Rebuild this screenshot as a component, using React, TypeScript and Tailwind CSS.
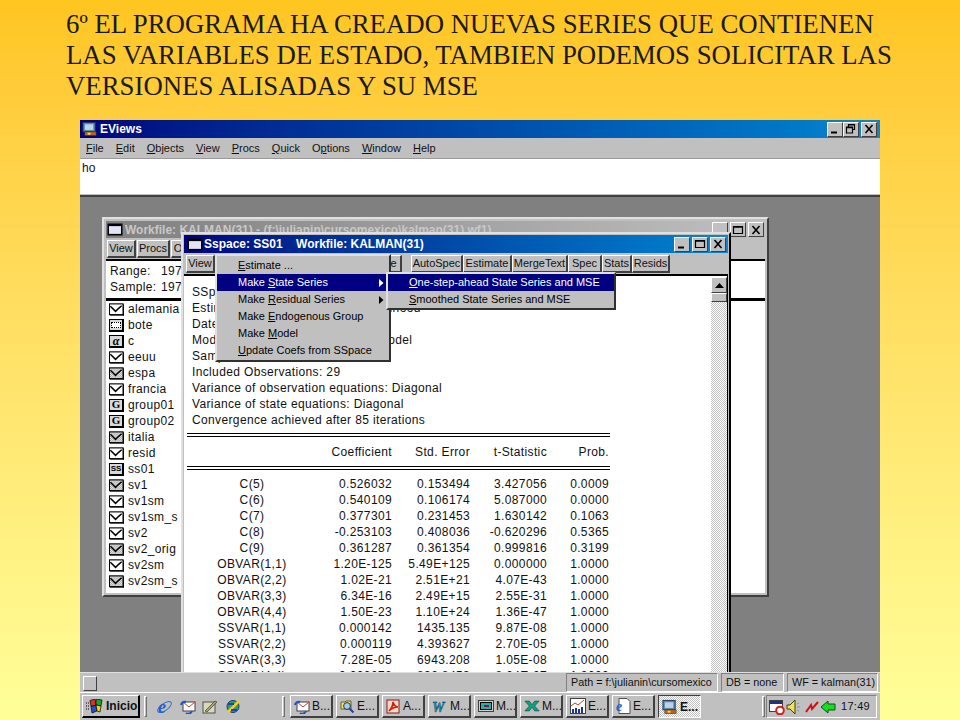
import React from "react";

const bevel = "border border-t-white border-l-white border-r-[#404040] border-b-[#404040] bg-[#c0c0c0]";
const sunken = "border border-t-[#808080] border-l-[#808080] border-r-white border-b-white";
const dither = "bg-[repeating-conic-gradient(#c0c0c0_0_25%,#ffffff_0_50%)] bg-[length:2px_2px]";

const Mn = ({ t, i }: { t: string; i: number }) => (
  <>
    {t.slice(0, i)}
    <u>{t[i]}</u>
    {t.slice(i + 1)}
  </>
);

const WinBtn = ({ kind, dim }: { kind: "min" | "max" | "restore" | "close"; dim?: boolean }) => (
  <div className={`${bevel} w-[16px] h-[15px] flex items-center justify-center`}>
    <svg width="12" height="10" viewBox="0 0 12 10" fill="none" stroke={dim ? "#404040" : "#000"} strokeWidth="1.2">
      {kind === "min" && <path d="M2 8.500h6" strokeWidth="2" />}
      {kind === "max" && <path d="M1.500 1.500h9v7h-9zM1.500 2.200h9" />}
      {kind === "restore" && <path d="M3.500 2.500v-2h6v5h-2M1.500 3h6v6h-6zM3.500 1h6M1.500 3.600h6" />}
      {kind === "close" && <path d="M2.500 1l7 8M9.500 1l-7 8" strokeWidth="1.600" />}
    </svg>
  </div>
);

const DocIcon = () => (
  <svg width="16" height="13" viewBox="0 0 16 13" className="shrink-0">
    <rect x="0.500" y="0.500" width="15" height="12" fill="#000" />
    <rect x="2" y="3" width="12" height="8" fill="#c8c8e8" />
    <path d="M2 5h12M2 7h12M2 9h12" stroke="#fff" />
  </svg>
);

const Series = ({ gray }: { gray?: boolean }) => (
  <svg width="15" height="13" viewBox="0 0 16 13" className="shrink-0">
    <defs>
      <pattern id="dth" width="2" height="2" patternUnits="userSpaceOnUse">
        <rect width="2" height="2" fill="#fff" />
        <rect width="1" height="1" fill="#909090" />
        <rect x="1" y="1" width="1" height="1" fill="#909090" />
      </pattern>
    </defs>
    <rect x="0.500" y="0.500" width="14.500" height="11.500" fill={gray ? "url(#dth)" : "#fff"} stroke="#000" strokeWidth="1.200" />
    <path d="M15.500 1v12M1 12.500h15" stroke="#000" />
    <path d="M1.500 3l5.500 5.500 3-3 3.500-3" fill="none" stroke="#000" strokeWidth="1.600" />
  </svg>
);

const Badge = ({ children, className }: { children: React.ReactNode; className: string }) => (
  <div className={`w-[15px] h-[13px] shrink-0 border border-black border-r-2 border-b-2 flex items-center justify-center bg-[#d8d8d8] text-black font-bold leading-none tracking-normal ${className}`}>
    {children}
  </div>
);

const ListIcon = ({ kind }: { kind: string }) => {
  if (kind === "s") return <Series />;
  if (kind === "g") return <Series gray />;
  if (kind === "G") return <Badge className="text-[11px] [font-family:'Liberation_Serif',serif]">G</Badge>;
  if (kind === "a") return <Badge className="text-[12px] italic [font-family:'Liberation_Serif',serif]">α</Badge>;
  if (kind === "S") return <Badge className="text-[8px] tracking-[1px]">SS</Badge>;
  return (
    <Badge className="">
      <div className="w-[10px] h-[6px] border border-black border-dotted bg-white" />
    </Badge>
  );
};

const objects: [string, string][] = [
  ["alemania", "s"], ["bote", "b"], ["c", "a"], ["eeuu", "s"], ["espa", "g"], ["francia", "s"],
  ["group01", "G"], ["group02", "G"], ["italia", "g"], ["resid", "s"], ["ss01", "S"], ["sv1", "g"],
  ["sv1sm", "s"], ["sv1sm_s", "s"], ["sv2", "s"], ["sv2_orig", "g"], ["sv2sm", "s"], ["sv2sm_s", "g"],
];

const rows = [
  ["C(5)", "0.526032", "0.153494", "3.427056", "0.0009"],
  ["C(6)", "0.540109", "0.106174", "5.087000", "0.0000"],
  ["C(7)", "0.377301", "0.231453", "1.630142", "0.1063"],
  ["C(8)", "-0.253103", "0.408036", "-0.620296", "0.5365"],
  ["C(9)", "0.361287", "0.361354", "0.999816", "0.3199"],
  ["OBVAR(1,1)", "1.20E-125", "5.49E+125", "0.000000", "1.0000"],
  ["OBVAR(2,2)", "1.02E-21", "2.51E+21", "4.07E-43", "1.0000"],
  ["OBVAR(3,3)", "6.34E-16", "2.49E+15", "2.55E-31", "1.0000"],
  ["OBVAR(4,4)", "1.50E-23", "1.10E+24", "1.36E-47", "1.0000"],
  ["SSVAR(1,1)", "0.000142", "1435.135", "9.87E-08", "1.0000"],
  ["SSVAR(2,2)", "0.000119", "4.393627", "2.70E-05", "1.0000"],
  ["SSVAR(3,3)", "7.28E-05", "6943.208", "1.05E-08", "1.0000"],
  ["SSVAR(4,4)", "0.000072", "892.8453", "8.04E-07", "1.0000"],
];

const TableRow = ({ cells }: { cells: string[] }) => (
  <div className="grid grid-cols-[130px_75px_78px_77px_62px] h-[16px] leading-[16px]">
    <div className="text-center">{cells[0]}</div>
    {cells.slice(1).map((c, i) => (
      <div key={i} className="text-right">{c}</div>
    ))}
  </div>
);

const DoubleLine = () => <div className="h-[4px] w-[423px] border-y border-black" />;

const ToolBtn = ({ w, children }: { w: number; children: React.ReactNode }) => (
  <div style={{ width: w }} className={`${bevel} h-[18px] shrink-0 flex items-center justify-center leading-none border-b-2 border-r-2 text-[11px] tracking-normal overflow-hidden`}>
    {children}
  </div>
);

const Arrow = () => (
  <svg width="5" height="8" viewBox="0 0 5 8" className="absolute right-[5px] top-[5px]">
    <path d="M0 0l4.500 4L0 8z" fill="currentColor" />
  </svg>
);

const MenuItem = ({ active, arrow, children }: { active?: boolean; arrow?: boolean; children: React.ReactNode }) => (
  <div className={`relative h-[17px] leading-[17px] whitespace-nowrap pl-[21px] ${active ? "bg-[#000080] text-white" : "text-black"}`}>
    {children}
    {arrow && <Arrow />}
  </div>
);

const WorkfileWindow = () => (
  <div className="absolute left-[22px] top-[20px] w-[667px] h-[380px] border-2 border-t-[#e0e0e0] border-l-[#e0e0e0] border-r-[#404040] border-b-[#404040] bg-[#c0c0c0] p-[2px] flex flex-col tracking-[0.35px]">
    <div className="h-[17px] shrink-0 bg-gradient-to-r from-[#808080] to-[#c0c0c0] flex items-center pl-[1px] gap-[2px] font-bold text-[#c8c8c8] tracking-normal whitespace-nowrap overflow-hidden">
      <DocIcon />
      <span className="flex-1">Workfile: KALMAN(31) - (f:\julianin\cursomexico\kalman(31).wf1)</span>
      <div className="flex items-center gap-[2px] pr-[1px]">
        <WinBtn kind="min" dim />
        <WinBtn kind="max" />
        <WinBtn kind="close" />
      </div>
    </div>
    <div className="h-[18px] mt-[2px] shrink-0 flex gap-[1px] pl-[1px]">
      <ToolBtn w={29}>View</ToolBtn>
      <ToolBtn w={33}>Procs</ToolBtn>
      <ToolBtn w={44}>Objects</ToolBtn>
    </div>
    <div className="h-[39px] shrink-0 bg-white border-t-2 border-black pl-[4px] pt-[2px] leading-[16px] mt-[1px]">
      <div className="flex"><span className="w-[51px]">Range:</span><span>1970</span></div>
      <div className="flex"><span className="w-[51px]">Sample:</span><span>1970</span></div>
    </div>
    <div className="flex-1 min-h-0 bg-white border-t-2 border-black">
      <div className="h-[1px] bg-black" />
      <div className="pl-[3px] flex flex-col">
        {objects.map(([name, kind]) => (
          <div key={name} className="h-[16px] flex items-center gap-[4px] leading-[16px]">
            <ListIcon kind={kind} />
            <span>{name}</span>
          </div>
        ))}
      </div>
    </div>
  </div>
);

const SspaceWindow = () => (
  <div className="absolute left-[101px] top-[35px] w-[550px] h-[460px] border-2 border-t-[#e0e0e0] border-l-[#e0e0e0] border-r-black border-b-black bg-[#c0c0c0] p-[1px] flex flex-col tracking-[0.36px]">
    <div className="h-[18px] shrink-0 bg-gradient-to-r from-[#000080] to-[#1084d0] flex items-center pl-[3px] pr-[2px] gap-[1px] font-bold text-white text-[12px] tracking-normal whitespace-pre">
      <DocIcon />
      <span className="flex-1">Sspace: SS01    Workfile: KALMAN(31)</span>
      <div className="flex items-center gap-[2px]">
        <WinBtn kind="min" />
        <WinBtn kind="max" />
        <WinBtn kind="close" />
      </div>
    </div>
    <div className="h-[18px] mt-[2px] shrink-0 flex pl-[2px]">
      <ToolBtn w={29}>View</ToolBtn>
      <ToolBtn w={34}>Procs</ToolBtn>
      <ToolBtn w={45}>Objects</ToolBtn>
      <ToolBtn w={30}>Print</ToolBtn>
      <ToolBtn w={34}>Name</ToolBtn>
      <ToolBtn w={44}>Freeze</ToolBtn>
      <div className="w-[9px]" />
      <ToolBtn w={52}>AutoSpec</ToolBtn>
      <ToolBtn w={49}>Estimate</ToolBtn>
      <ToolBtn w={56}>MergeText</ToolBtn>
      <ToolBtn w={34}>Spec</ToolBtn>
      <ToolBtn w={30}>Stats</ToolBtn>
      <ToolBtn w={38}>Resids</ToolBtn>
    </div>
    <div className="flex-1 min-h-0 mt-[1px] bg-white border-t-2 border-black flex overflow-hidden">
      <div className="flex-1 pl-[8px] pt-[8px] leading-[16px] whitespace-nowrap">
        <div>SSpace: SS01</div>
        <div>Estimation Method: Maximum Likelihood</div>
        <div>Date: 06/20/02 Time: 17:42</div>
        <div>Model: Time-varying Statespace Model</div>
        <div>Sample: 1970:1 1998:1</div>
        <div>Included Observations: 29</div>
        <div>Variance of observation equations: Diagonal</div>
        <div>Variance of state equations: Diagonal</div>
        <div>Convergence achieved after 85 iterations</div>
        <div className="-ml-[5px] mt-[5px]">
          <DoubleLine />
          <div className="h-[29px] flex items-center">
            <div className="w-full"><TableRow cells={["", "Coefficient", "Std. Error", "t-Statistic", "Prob."]} /></div>
          </div>
          <DoubleLine />
          <div className="mt-[6px]">
            {rows.map((r) => (
              <TableRow key={r[0]} cells={r} />
            ))}
          </div>
        </div>
      </div>
      <div className="w-[16px] shrink-0 flex flex-col pt-[1px]">
        <div className={`${bevel} h-[16px] shrink-0 flex items-center justify-center`}>
          <svg width="9" height="5" viewBox="0 0 9 5"><path d="M4.500 0L9 5H0z" fill="#000" /></svg>
        </div>
        <div className={`${bevel} h-[9px] shrink-0`} />
        <div className={`flex-1 ${dither}`} />
      </div>
      <div className="w-[1px] bg-black shrink-0" />
    </div>
  </div>
);

const ObjectMenu = () => (
  <div className="absolute left-[135px] top-[57px] w-[176px] h-[108px] border-2 border-t-[#e0e0e0] border-l-[#e0e0e0] border-r-[#303030] border-b-[#303030] bg-[#c0c0c0] pt-[1px] text-[11px] text-black">
    <MenuItem><Mn t="Estimate ..." i={0} /></MenuItem>
    <MenuItem active arrow><Mn t="Make State Series" i={5} /></MenuItem>
    <MenuItem arrow><Mn t="Make Residual Series" i={5} /></MenuItem>
    <MenuItem><Mn t="Make Endogenous Group" i={5} /></MenuItem>
    <MenuItem><Mn t="Make Model" i={5} /></MenuItem>
    <MenuItem><Mn t="Update Coefs from SSpace" i={0} /></MenuItem>
  </div>
);

const StateMenu = () => (
  <div className="absolute left-[306px] top-[75px] w-[230px] h-[38px] border-2 border-t-[#e0e0e0] border-l-[#e0e0e0] border-r-[#303030] border-b-[#303030] bg-[#c0c0c0] text-[11px]">
    <MenuItem active><Mn t="One-step-ahead State Series and MSE" i={0} /></MenuItem>
    <MenuItem><Mn t="Smoothed State Series and MSE" i={0} /></MenuItem>
  </div>
);

const StatusBox = ({ className, children }: { className: string; children: React.ReactNode }) => (
  <div className={`${sunken} h-[19px] shrink-0 flex items-center pl-[4px] whitespace-nowrap leading-none text-[10.8px] ${className}`}>{children}</div>
);

const Flag = () => (
  <svg width="18" height="15" viewBox="0 0 18 15" className="shrink-0">
    <path d="M0 4h3M0 7h3M0 10h3" stroke="#000" strokeDasharray="1 1" />
    <path d="M4 1.500l5-1.500 1 6-5 1.500z" fill="#e03020" stroke="#000" strokeWidth=".7" />
    <path d="M10 0l6 1-1 6-5-1z" fill="#20a030" stroke="#000" strokeWidth=".7" />
    <path d="M5 7.500l5-1.500 1 6-5 2z" fill="#2050d0" stroke="#000" strokeWidth=".7" />
    <path d="M10 6l5 1-1 6-3-1z" fill="#f0d020" stroke="#000" strokeWidth=".7" />
  </svg>
);

const IeIcon = () => (
  <svg width="17" height="16" viewBox="0 0 17 16" className="shrink-0">
    <ellipse cx="8.500" cy="8" rx="8" ry="3.500" transform="rotate(-35 8.500 8)" fill="none" stroke="#3070d0" />
    <text x="2" y="14" fontSize="18" fontWeight="700" fontStyle="italic" fill="#2060d0" fontFamily="Liberation Serif">e</text>
  </svg>
);

const MailIcon = () => (
  <svg width="16" height="15" viewBox="0 0 16 15" className="shrink-0">
    <rect x="3" y="3" width="12" height="9" fill="#fff" stroke="#404040" />
    <path d="M3 3l6 5 6-5" fill="none" stroke="#c04040" />
    <path d="M1 6a4 4 0 0 1 5-3" fill="none" stroke="#2050d0" strokeWidth="2" />
    <path d="M12 12a4 4 0 0 1-6 2" fill="none" stroke="#2050d0" strokeWidth="2" />
  </svg>
);

const DeskIcon = () => (
  <svg width="16" height="15" viewBox="0 0 16 15" className="shrink-0">
    <rect x="1" y="3" width="12" height="11" fill="#d8d8c0" stroke="#505050" />
    <path d="M3 12L13 2l2 1L5 13z" fill="#b0a060" stroke="#404040" strokeWidth=".7" />
  </svg>
);

const Ie2Icon = () => (
  <svg width="17" height="15" viewBox="0 0 17 15" className="shrink-0">
    <circle cx="8" cy="7.500" r="6" fill="#30a060" stroke="#203080" />
    <path d="M3 13L14 2" stroke="#f0d020" strokeWidth="2.500" />
    <path d="M3 5h6M6 11h6" stroke="#2040c0" strokeWidth="2" />
  </svg>
);

const SearchIcon = () => (
  <svg width="15" height="15" viewBox="0 0 15 15" className="shrink-0">
    <path d="M1 3h4l1-1h5v8H1z" fill="#f0e080" stroke="#606020" />
    <circle cx="7" cy="7" r="3.400" fill="#a0d0f0" stroke="#303030" />
    <path d="M9.500 9.500l4 4" stroke="#2040a0" strokeWidth="2" />
  </svg>
);

const AcroIcon = () => (
  <svg width="15" height="15" viewBox="0 0 15 15" className="shrink-0">
    <rect x="1" y="1" width="12" height="13" fill="#f0d8c8" stroke="#802020" />
    <path d="M3 12C6 9 7 5 7 3c1 3 3 5 5 5-3 0-6 1-9 4z" fill="none" stroke="#d02010" strokeWidth="1.600" />
  </svg>
);

const WordIcon = () => (
  <svg width="16" height="14" viewBox="0 0 16 14" className="shrink-0">
    <text x="0" y="13" fontSize="14" fontWeight="700" fontStyle="italic" fill="#10a0b0" stroke="#003060" strokeWidth=".4" fontFamily="Liberation Serif">W</text>
  </svg>
);

const ScreenIcon = () => (
  <svg width="16" height="12" viewBox="0 0 16 12" className="shrink-0">
    <rect x="0.500" y="0.500" width="15" height="11" fill="#d0d0d0" stroke="#404040" />
    <rect x="2.500" y="2.500" width="11" height="7" fill="#20b0b0" stroke="#000" />
    <path d="M6 6h5" stroke="#702040" strokeWidth="2" />
  </svg>
);

const ExcelIcon = () => (
  <svg width="16" height="12" viewBox="0 0 18 13" className="shrink-0">
    <path d="M1 1h5l3 4 3-4h5l-5 5.500 5 5.500h-5l-3-4-3 4H1l5-5.500z" fill="#10a080" stroke="#104040" strokeWidth=".7" />
  </svg>
);

const ChartIcon = () => (
  <svg width="16" height="16" viewBox="0 0 16 16" className="shrink-0">
    <rect x="0.500" y="0.500" width="15" height="15" fill="#fff" stroke="#404040" />
    <path d="M1 8l4-3 3 2 6-5" stroke="#c04020" fill="none" />
    <path d="M3 15v-4M6 15v-5M9 15v-4M12 15v-6" stroke="#203090" strokeWidth="2" />
  </svg>
);

const IeDoc = () => (
  <svg width="15" height="16" viewBox="0 0 15 16" className="shrink-0">
    <path d="M3 .5h8l3 3v12H3z" fill="#fff" stroke="#505050" />
    <text x="0" y="13" fontSize="14" fontWeight="700" fontStyle="italic" fill="#2060d0" fontFamily="Liberation Serif">e</text>
  </svg>
);

const EviewsIcon = () => (
  <svg width="16" height="16" viewBox="0 0 17 16" className="shrink-0">
    <rect x="1" y="1" width="13" height="10" fill="#5090a0" stroke="#203060" />
    <rect x="3" y="3" width="9" height="6" fill="#c0d0f0" />
    <rect x="3" y="11" width="12" height="4" fill="#c06020" stroke="#303030" strokeWidth=".6" />
    <rect x="6" y="12" width="3" height="2" fill="#f0e040" />
  </svg>
);

const tasks: [React.ReactNode, string][] = [
  [<MailIcon />, "B..."],
  [<SearchIcon />, "E..."],
  [<AcroIcon />, "A..."],
  [<WordIcon />, "M..."],
  [<ScreenIcon />, "M..."],
  [<ExcelIcon />, "M..."],
  [<ChartIcon />, "E..."],
  [<IeDoc />, "E..."],
];

const Handle = () => <div className="w-[3px] h-[21px] shrink-0 border border-t-white border-l-white border-r-[#707070] border-b-[#707070]" />;

const Taskbar = () => (
  <div className="h-[27px] shrink-0 bg-[#c0c0c0] flex items-center pl-[2px] text-[12px]">
    <div className={`${bevel} w-[58px] h-[23px] shrink-0 flex items-center gap-[2px] pl-[3px] font-bold border-b-2 border-r-2 border-b-black border-r-black`}>
      <Flag />
      <span>Inicio</span>
    </div>
    <div className="ml-[4px]"><Handle /></div>
    <div className="ml-[9px] w-[86px] flex items-center justify-between shrink-0">
      <IeIcon />
      <MailIcon />
      <DeskIcon />
      <Ie2Icon />
    </div>
    <div className="ml-[40px]"><Handle /></div>
    <div className="ml-[5px] flex gap-[3px]">
      {tasks.map(([icon, label], i) => (
        <div key={i} className={`${bevel} w-[43px] h-[23px] shrink-0 flex items-center gap-[2px] pl-[3px] border-b-2 border-r-2 whitespace-nowrap overflow-hidden`}>
          {icon}
          <span>{label}</span>
        </div>
      ))}
      <div className={`w-[43px] h-[23px] shrink-0 flex items-center gap-[2px] pl-[3px] border border-t-[#404040] border-l-[#404040] border-r-white border-b-white ${dither} font-bold overflow-hidden whitespace-nowrap`}>
        <EviewsIcon />
        <span>E...</span>
      </div>
    </div>
    <div className="ml-[61px]"><Handle /></div>
    <div className={`${sunken} ml-[1px] w-[111px] h-[23px] shrink-0 flex items-center pl-[2px] pr-[6px] gap-[1px]`}>
      <svg width="16" height="16" viewBox="0 0 16 16" className="shrink-0">
        <rect x="0.500" y="1.500" width="13" height="11" fill="#fff" stroke="#404040" />
        <rect x="1" y="2" width="12" height="3" fill="#203090" />
        <circle cx="11" cy="11.500" r="3.800" fill="#fff" stroke="#d02020" strokeWidth="2" />
      </svg>
      <svg width="14" height="16" viewBox="0 0 14 16" className="shrink-0">
        <path d="M1 6h3l5-5v14l-5-5H1z" fill="#f0e060" stroke="#404000" />
        <path d="M11 5l2-1M11 8h3M11 11l2 1" stroke="#909090" />
      </svg>
      <svg width="14" height="14" viewBox="0 0 14 14" className="shrink-0 ml-[4px]">
        <path d="M1 12L6 5l1 4 6-7" fill="none" stroke="#d01010" strokeWidth="2" />
      </svg>
      <svg width="16" height="14" viewBox="0 0 16 14" className="shrink-0">
        <path d="M8 1L1 7l7 6v-3h7V4H8z" fill="#10e020" stroke="#105010" />
      </svg>
      <span className="flex-1 text-right text-[11px] tracking-[0.3px]">17:49</span>
    </div>
  </div>
);

export default function App() {
  return (
    <div className="w-[960px] h-[720px] overflow-hidden flex flex-col bg-gradient-to-b from-[#ffc51f] to-[#ffff99] [font-family:'Liberation_Sans',sans-serif] text-[12px] text-[#111]">
      <h1 className="h-[120px] shrink-0 pl-[66px] pt-[9px] text-[26.8px] leading-[31px] font-normal text-[#1a1a1a] whitespace-pre [font-family:'Liberation_Serif',serif]">
        {"6º EL PROGRAMA HA CREADO NUEVAS SERIES QUE CONTIENEN\nLAS VARIABLES DE ESTADO, TAMBIEN PODEMOS SOLICITAR LAS\nVERSIONES ALISADAS Y SU MSE"}
      </h1>
      <div className="mx-[80px] flex-1 min-h-0 flex flex-col">
        <div className="h-[18px] shrink-0 bg-gradient-to-r from-[#000080] to-[#1084d0] flex items-center pl-[2px] pr-[3px] gap-[2px]">
          <EviewsIcon />
          <span className="font-bold text-white text-[12px] flex-1">EViews</span>
          <div className="flex items-center">
            <WinBtn kind="min" />
            <WinBtn kind="restore" />
            <div className="ml-[2px]"><WinBtn kind="close" /></div>
          </div>
        </div>
        <div className="h-[21px] shrink-0 bg-[#c0c0c0] flex items-center pl-[6px] gap-[12px] text-[11px] border-b border-[#9a9a9a]">
          <span><Mn t="File" i={0} /></span>
          <span><Mn t="Edit" i={0} /></span>
          <span><Mn t="Objects" i={0} /></span>
          <span><Mn t="View" i={0} /></span>
          <span><Mn t="Procs" i={0} /></span>
          <span><Mn t="Quick" i={0} /></span>
          <span><Mn t="Options" i={1} /></span>
          <span><Mn t="Window" i={0} /></span>
          <span><Mn t="Help" i={0} /></span>
        </div>
        <div className="h-[35px] shrink-0 bg-white pl-[2px] pt-[1px] leading-[16px]">ho</div>
        <div className="h-[3px] shrink-0 bg-[#c0c0c0] border-b-2 border-[#404040]" />
        <div className="flex-1 min-h-0 relative overflow-hidden bg-[#808080]">
          <WorkfileWindow />
          <SspaceWindow />
          <ObjectMenu />
          <StateMenu />
        </div>
        <div className="h-[21px] shrink-0 bg-[#c0c0c0] border-t border-[#e0e0e0] border-b border-b-white flex items-center pl-[3px] gap-[3px]">
          <div className={`${bevel} w-[14px] h-[15px] shrink-0 mt-[1px]`} />
          <div className="flex-1" />
          <StatusBox className="w-[152px]">Path = f:\julianin\cursomexico</StatusBox>
          <StatusBox className="w-[63px]">DB = none</StatusBox>
          <StatusBox className="w-[91px] mr-[2px]">WF = kalman(31)</StatusBox>
        </div>
        <Taskbar />
      </div>
    </div>
  );
}
